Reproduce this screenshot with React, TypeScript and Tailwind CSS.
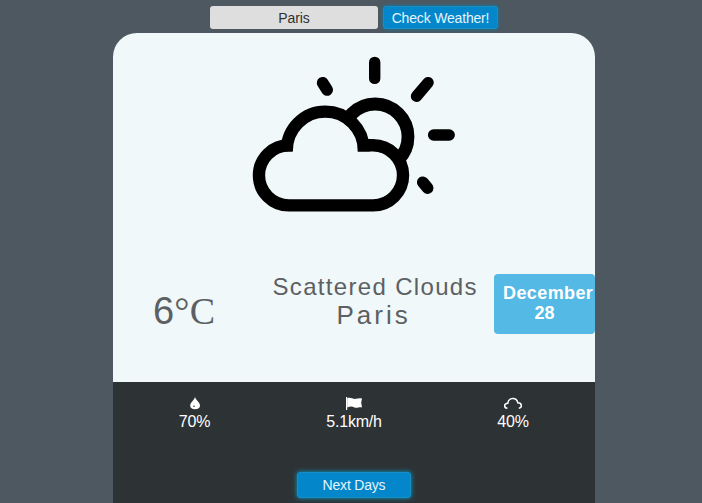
function CloudSun() {
  return (
    <svg className="h-[180px] w-[230px]" viewBox="240 45 230 180" fill="none" stroke="#000">
      <circle cx="375.2" cy="136.8" r="32.8" strokeWidth="12.8" />
      <path
        d="M289 205.4A30 30 0 0 1 289 145.3L286.7 150A38.3 38.3 0 0 1 363.3 150L373 145.3A30 30 0 0 1 373 205.4Z"
        fill="#f0f8fa"
        stroke="none"
      />
      <path d="M292 145.3H289A30 30 0 0 0 289 205.4H373A30 30 0 0 0 373 145.3H358" strokeWidth="12.4" />
      <path d="M286.9 151.4V150A38.2 38.2 0 0 1 363.7 150V151.4" strokeWidth="12.2" />
      <g strokeWidth="11.4" strokeLinecap="round">
        <path d="M374.7 62.4V78.4M433.6 135H449.2M428.1 82.6L416.5 96.2" />
        <path d="M322.7 82.8L327.1 89.9M422.8 182.3L427.6 188" strokeWidth="11.8" />
      </g>
    </svg>
  );
}

function Drop() {
  return (
    <svg className="h-[13px] w-4" viewBox="0 0 16 13">
      <path d="M8 0C7.4 3 3.2 5.4 3.2 8.7C3.2 11 5 12.2 8 12.2S13 11 13 8.7C13 5.4 8.8 3 8 0Z" fill="#fff" />
      <circle cx="7" cy="9.3" r=".8" fill="#2d3235" />
    </svg>
  );
}

function Flag() {
  return (
    <svg className="h-[13px] w-[18px]" viewBox="0 0 18 13" fill="#fff">
      <path d="M1 0H2.2V13H1Z" />
      <path d="M2.2 1.2C6 -.4 8 2.6 11 1.8C13 1.3 15 1 17 1.5L16.2 5.5L17 10.4C14 9.6 12 11.6 9.5 10.4C7 9.2 5 9.4 2.2 10.4Z" />
    </svg>
  );
}

function Cloud() {
  return (
    <svg className="h-[13px] w-5" viewBox="0 0 20 13" fill="none" stroke="#fff" strokeWidth="1.5">
      <path d="M4.4 11.3C.6 10.8.8 6.4 4.8 6.2C5.4 .4 13.6 -.2 14.8 5.8C19.3 5.8 19.3 10.8 15.8 11.3" />
    </svg>
  );
}

export default function App() {
  return (
    <div className="flex h-[503px] w-[702px] flex-col overflow-hidden bg-[#4e5860] font-['Liberation_Sans',Arial,sans-serif]">
      <form className="ml-[210px] flex h-[33px] items-start gap-[5px] pt-1.5" onSubmit={(e) => e.preventDefault()}>
        <input
          className="h-[23px] w-[168px] rounded-[3px] bg-[#dededf] text-center text-[14px] tracking-[-0.1px] text-[#303030] outline-none"
          defaultValue="Paris"
          aria-label="City"
        />
        <button className="h-[23px] w-[115px] rounded-[3px] border border-[#168fc9] bg-[#0387ca] text-[14px] leading-[22px] tracking-[-0.18px] whitespace-nowrap text-[#e4f5fd] shadow-[0_0_4px_#087fa8]">
          Check Weather!
        </button>
      </form>

      <main className="ml-[113px] flex w-[482px] flex-1 flex-col overflow-hidden rounded-t-[24px] bg-[#f0f8fa]">
        <div className="flex h-[241px] items-start pt-3 pl-[127px]">
          <CloudSun />
        </div>
        <section className="flex h-[108px] shrink-0 items-start text-[#5d6062]">
          <div className="w-[159px] pt-[15px] pl-[40px] text-[38px] leading-[44px] whitespace-nowrap">
            6<span className="font-['Liberation_Serif',serif] tracking-[0.4px]">°C</span>
          </div>
          <div className="w-[222px]">
            <div className="-mt-px pl-[0.5px] text-[24px] leading-[27px] tracking-[1.33px] whitespace-nowrap">
              Scattered Clouds
            </div>
            <div className="pl-[64.5px] text-[26px] leading-[30px] tracking-[3px]">Paris</div>
          </div>
          <div className="h-[60px] w-[101px] rounded-[4px] bg-[#54b9e5] pt-[9px] pl-[9px] text-[18px] leading-[20px] font-bold text-white">
            <div className="w-[92px] tracking-[0.4px]">December</div>
            <div className="w-[83px] text-center">28</div>
          </div>
        </section>
        <footer className="flex flex-1 flex-col bg-[#2d3235]">
          <div className="grid h-[89px] grid-cols-[160px_160px_162px] pt-[15px] text-[16px] leading-[18px] tracking-[-0.2px] text-white">
            <div className="flex flex-col items-center pl-[3px]">
              <Drop />
              <span className="pt-[3px]">70%</span>
            </div>
            <div className="flex flex-col items-center pl-[2px]">
              <Flag />
              <span className="pt-[3px]">5.1km/h</span>
            </div>
            <div className="flex flex-col items-center pr-[2px]">
              <Cloud />
              <span className="pt-[3px]">40%</span>
            </div>
          </div>
          <button className="mt-[1px] ml-[184px] h-[26px] w-[114px] rounded-[3px] border border-[#168fc9] bg-[#0387ca] text-[14px] tracking-[-0.2px] text-[#e4f5fd] shadow-[0_0_5px_#08a0c8]">
            Next Days
          </button>
        </footer>
      </main>
    </div>
  );
}
